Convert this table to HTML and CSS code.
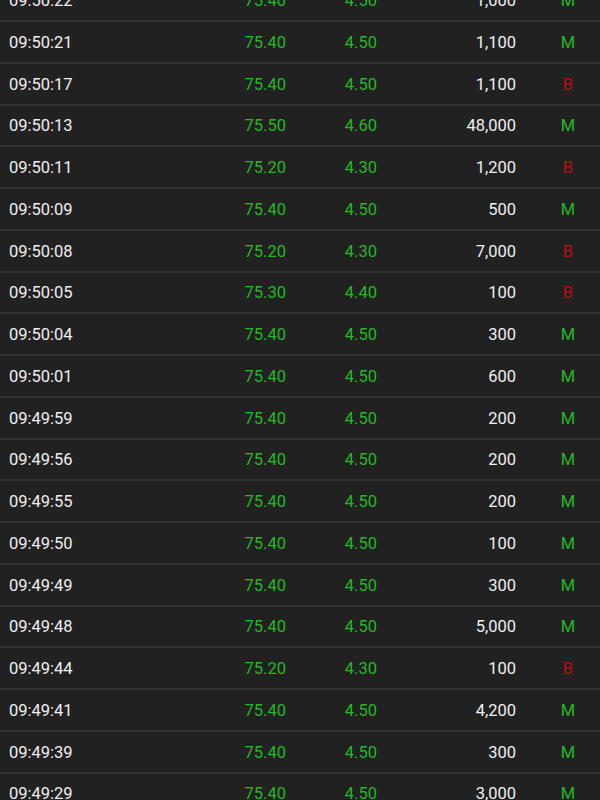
FILE: index.html
```html
<!DOCTYPE html>
<html>
<head>
<meta charset="utf-8">
<link rel="stylesheet" href="styles.css">
</head>
<body>
<div class="list">
  <div class="row"><span class="time">09:50:22</span><span class="price up">75.40</span><span class="chg up">4.50</span><span class="vol">1,000</span><span class="flag up">M</span></div>
  <div class="row"><span class="time">09:50:21</span><span class="price up">75.40</span><span class="chg up">4.50</span><span class="vol">1,100</span><span class="flag up">M</span></div>
  <div class="row"><span class="time">09:50:17</span><span class="price up">75.40</span><span class="chg up">4.50</span><span class="vol">1,100</span><span class="flag down">B</span></div>
  <div class="row"><span class="time">09:50:13</span><span class="price up">75.50</span><span class="chg up">4.60</span><span class="vol">48,000</span><span class="flag up">M</span></div>
  <div class="row"><span class="time">09:50:11</span><span class="price up">75.20</span><span class="chg up">4.30</span><span class="vol">1,200</span><span class="flag down">B</span></div>
  <div class="row"><span class="time">09:50:09</span><span class="price up">75.40</span><span class="chg up">4.50</span><span class="vol">500</span><span class="flag up">M</span></div>
  <div class="row"><span class="time">09:50:08</span><span class="price up">75.20</span><span class="chg up">4.30</span><span class="vol">7,000</span><span class="flag down">B</span></div>
  <div class="row"><span class="time">09:50:05</span><span class="price up">75.30</span><span class="chg up">4.40</span><span class="vol">100</span><span class="flag down">B</span></div>
  <div class="row"><span class="time">09:50:04</span><span class="price up">75.40</span><span class="chg up">4.50</span><span class="vol">300</span><span class="flag up">M</span></div>
  <div class="row"><span class="time">09:50:01</span><span class="price up">75.40</span><span class="chg up">4.50</span><span class="vol">600</span><span class="flag up">M</span></div>
  <div class="row"><span class="time">09:49:59</span><span class="price up">75.40</span><span class="chg up">4.50</span><span class="vol">200</span><span class="flag up">M</span></div>
  <div class="row"><span class="time">09:49:56</span><span class="price up">75.40</span><span class="chg up">4.50</span><span class="vol">200</span><span class="flag up">M</span></div>
  <div class="row"><span class="time">09:49:55</span><span class="price up">75.40</span><span class="chg up">4.50</span><span class="vol">200</span><span class="flag up">M</span></div>
  <div class="row"><span class="time">09:49:50</span><span class="price up">75.40</span><span class="chg up">4.50</span><span class="vol">100</span><span class="flag up">M</span></div>
  <div class="row"><span class="time">09:49:49</span><span class="price up">75.40</span><span class="chg up">4.50</span><span class="vol">300</span><span class="flag up">M</span></div>
  <div class="row"><span class="time">09:49:48</span><span class="price up">75.40</span><span class="chg up">4.50</span><span class="vol">5,000</span><span class="flag up">M</span></div>
  <div class="row"><span class="time">09:49:44</span><span class="price up">75.20</span><span class="chg up">4.30</span><span class="vol">100</span><span class="flag down">B</span></div>
  <div class="row"><span class="time">09:49:41</span><span class="price up">75.40</span><span class="chg up">4.50</span><span class="vol">4,200</span><span class="flag up">M</span></div>
  <div class="row"><span class="time">09:49:39</span><span class="price up">75.40</span><span class="chg up">4.50</span><span class="vol">300</span><span class="flag up">M</span></div>
  <div class="row"><span class="time">09:49:29</span><span class="price up">75.40</span><span class="chg up">4.50</span><span class="vol">3,000</span><span class="flag up">M</span></div>
</div>
</body>
</html>
```
FILE: styles.css
```css
html, body {
  margin: 0;
  padding: 0;
  background: #212121;
  overflow: hidden;
}
body {
  font-family: Roboto, "Liberation Sans", sans-serif;
  font-size: 16.5px;
  color: #efefef;
}
.list {
  margin-top: -19.75px;
}
.row {
  display: grid;
  grid-template-columns: 191px 86px 91px 139px 1fr;
  align-items: center;
  height: 38.75px;
  padding-top: 1px;
  padding-left: 9px;
  border-bottom: 2px solid #333333;
}
.price, .chg, .vol {
  text-align: right;
}
.flag {
  text-align: center;
  padding-left: 20px;
}
.up {
  color: #25b825;
}
.down {
  color: #b41414;
}
```
